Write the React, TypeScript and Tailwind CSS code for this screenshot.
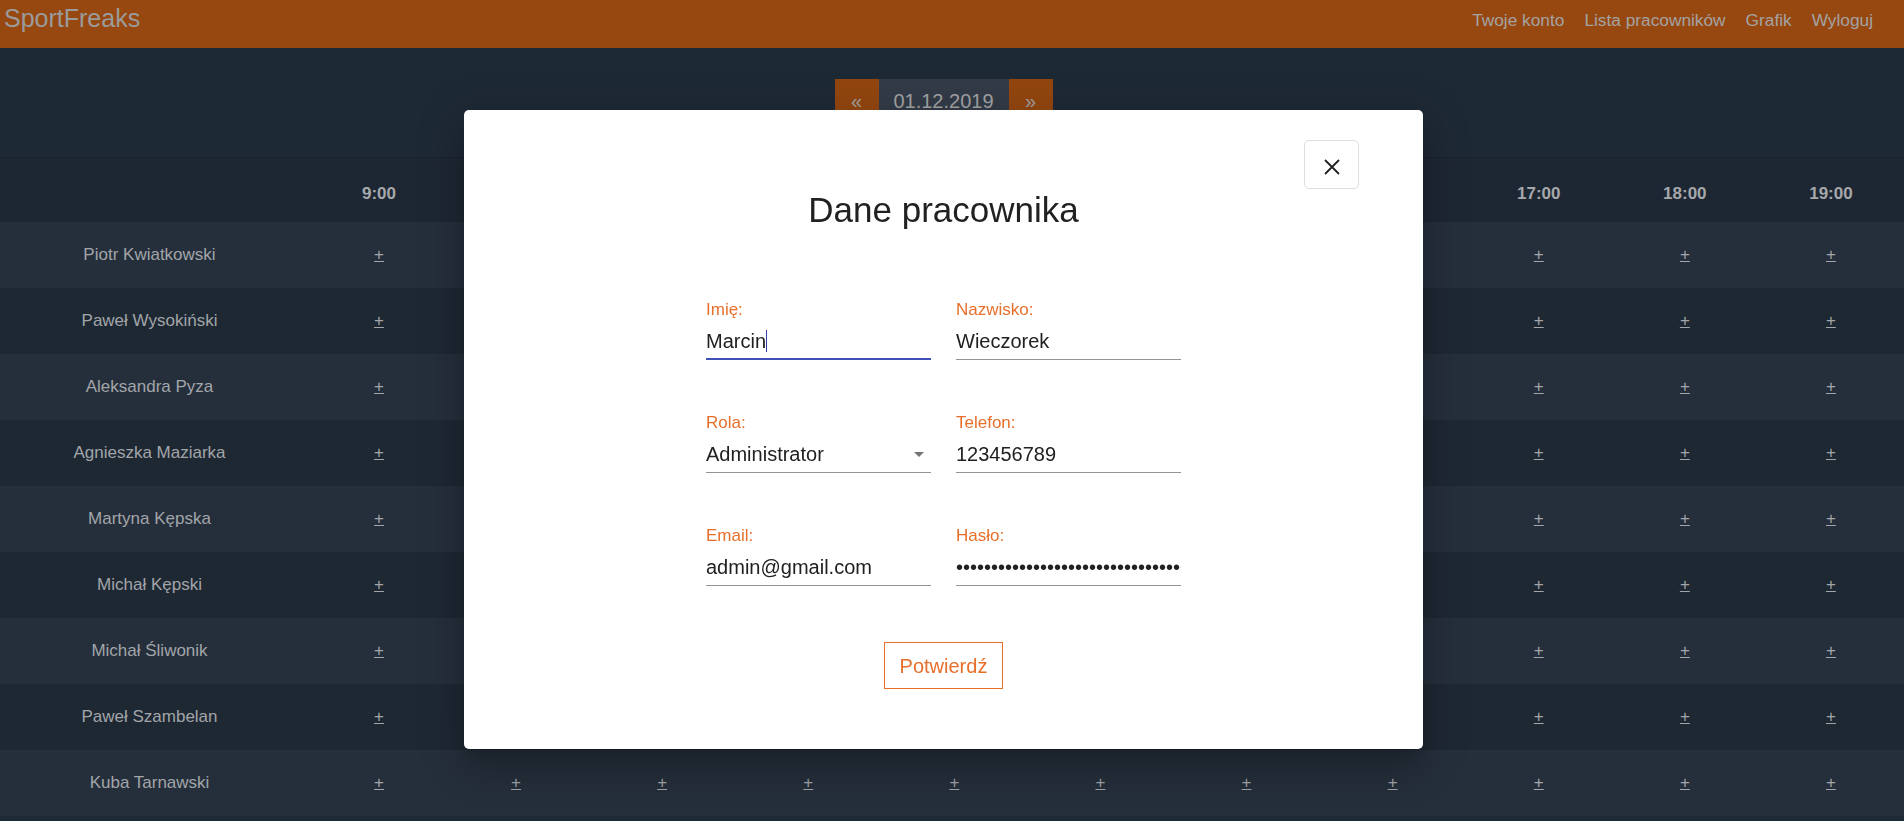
const hours = ["9:00", "10:00", "11:00", "12:00", "13:00", "14:00", "15:00", "16:00", "17:00", "18:00", "19:00"];

const employees = [
  "Piotr Kwiatkowski",
  "Paweł Wysokiński",
  "Aleksandra Pyza",
  "Agnieszka Maziarka",
  "Martyna Kępska",
  "Michał Kępski",
  "Michał Śliwonik",
  "Paweł Szambelan",
  "Kuba Tarnawski",
];

function Field({
  label,
  value,
  focused,
  select,
  password,
}: {
  label: string;
  value: string;
  focused?: boolean;
  select?: boolean;
  password?: boolean;
}) {
  return (
    <div className="flex flex-col">
      <label className="text-[17px] leading-[20px] text-[#e66f2a]">{label}</label>
      <div
        className={
          "relative mt-[9px] h-[31px] overflow-hidden whitespace-nowrap text-[20px] leading-[24px] text-[#212121] " +
          (focused ? "border-b-2 border-[#3f51b5] pb-[5px]" : "border-b border-[#949494] pb-[6px]")
        }
      >
        {password ? <span>{"•".repeat(40)}</span> : <span>{value}</span>}
        {focused && <span className="inline-block h-[22px] w-px translate-y-[1px] align-top bg-[#2f3f9f]" />}
        {select && (
          <svg viewBox="0 0 24 24" className="absolute right-0 top-0 h-6 w-6 fill-[#757575]">
            <path d="M7 10l5 5 5-5z" />
          </svg>
        )}
      </div>
    </div>
  );
}

export default function App() {
  return (
    <div className="relative h-[821px] w-full overflow-hidden bg-[#1e2936] font-['Liberation_Sans',Arial,sans-serif] text-[#a2a5a9]">
      {/* Navbar */}
      <nav className="flex h-[48px] items-start justify-between bg-[#974811]">
        <span className="mt-[3px] pl-[4px] text-[25px] leading-[30px] text-[#9b9b9b]">SportFreaks</span>
        <ul className="mt-[10px] flex gap-[20px] pr-[31px] text-[17.3px] leading-[20px] text-[#a3a3a3]">
          <li>Twoje konto</li>
          <li>Lista pracowników</li>
          <li>Grafik</li>
          <li>Wyloguj</li>
        </ul>
      </nav>

      {/* Date switcher */}
      <div className="flex justify-center pr-[17px] pt-[31px] pb-[34px]">
        <div className="flex h-[44px] text-[20px] text-[#a2a2a2]">
          <button className="flex w-[44px] items-center justify-center bg-[#93460f]">«</button>
          <div className="flex w-[130px] items-center justify-center bg-[#323b47]">01.12.2019</div>
          <button className="flex w-[44px] items-center justify-center bg-[#93460f]">»</button>
        </div>
      </div>

      {/* Schedule table */}
      <div className="text-[17px]">
        <div className="grid h-[65px] grid-cols-[315px_128px_repeat(10,minmax(0,1fr))] items-center border-t border-[#19222d] bg-[#1d2733] pt-[7px] font-bold text-[#a6a8ab]">
          <div />
          {hours.map((h) => (
            <div key={h} className="text-center">
              {h}
            </div>
          ))}
        </div>
        {employees.map((name, i) => (
          <div
            key={name}
            className={
              "grid h-[66px] grid-cols-[315px_128px_repeat(10,minmax(0,1fr))] items-center " +
              (i % 2 === 0 ? "bg-[#252f3b]" : "bg-[#1e2833]")
            }
          >
            <div className="pr-[16px] text-center">{name}</div>
            {hours.map((h) => (
              <div key={h} className="text-center">
                <a className="cursor-pointer underline">+</a>
              </div>
            ))}
          </div>
        ))}
      </div>

      {/* Modal */}
      <div className="fixed inset-0 flex items-start justify-center pr-[17px] pt-[110px]">
        <div className="relative h-[639px] w-[959px] rounded-[5px] bg-white pt-[80px] shadow-[0_11px_15px_-7px_rgba(0,0,0,0.2),0_24px_38px_3px_rgba(0,0,0,0.14),0_9px_46px_8px_rgba(0,0,0,0.12)]">
          <button className="absolute right-[64px] top-[30px] flex h-[49px] w-[55px] items-center justify-center rounded-[5px] border border-[#dedede] bg-white">
            <svg viewBox="0 0 16 16" className="mt-[4px] h-4 w-4" fill="none" stroke="#222" strokeWidth={1.8}>
              <path d="M1 1l14 14M15 1L1 15" />
            </svg>
          </button>
          <h2 className="text-center text-[35px] leading-[40px] text-[#212121]">Dane pracownika</h2>
          <div className="mt-[70px] grid grid-cols-[225px_225px] justify-center gap-x-[25px] gap-y-[53px]">
            <Field label="Imię:" value="Marcin" focused />
            <Field label="Nazwisko:" value="Wieczorek" />
            <Field label="Rola:" value="Administrator" select />
            <Field label="Telefon:" value="123456789" />
            <Field label="Email:" value="admin@gmail.com" />
            <Field label="Hasło:" value="" password />
          </div>
          <button className="mx-auto mt-[56px] block h-[47px] w-[119px] border border-[#e66f2a] text-[20px] text-[#e66f2a]">
            Potwierdź
          </button>
        </div>
      </div>
    </div>
  );
}
